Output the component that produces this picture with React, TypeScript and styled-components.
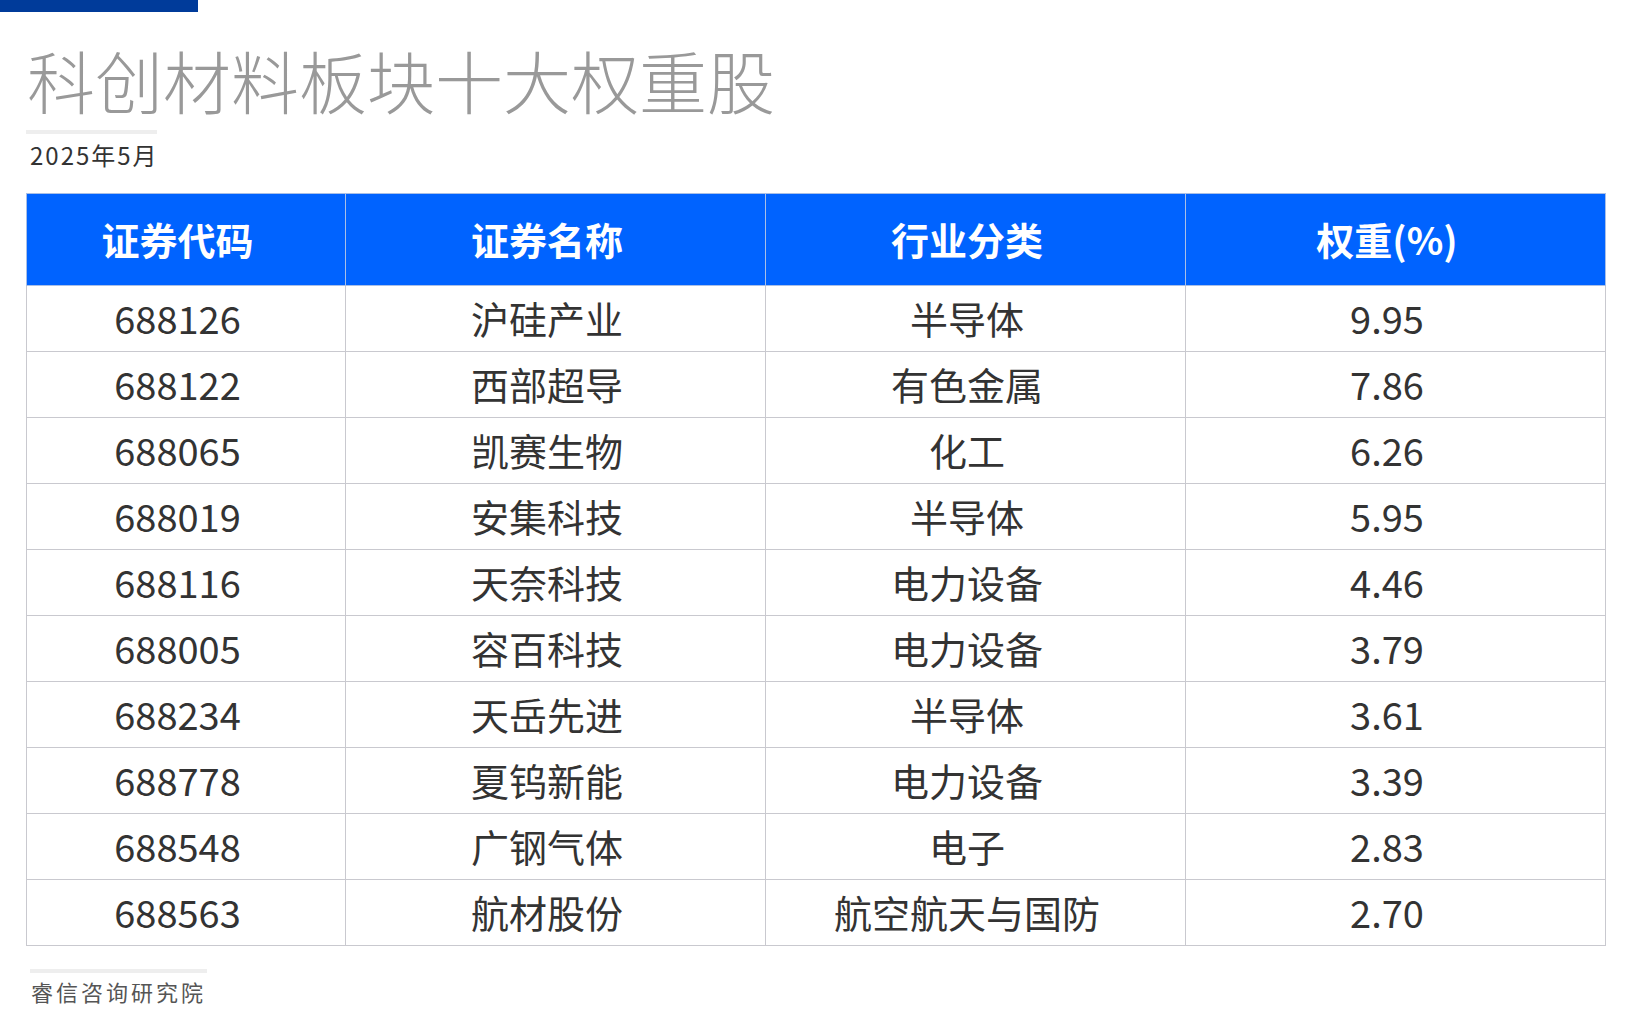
import styled, { createGlobalStyle } from "styled-components"

const GlobalStyle = createGlobalStyle`
    body {
        margin: 0;
        background: #ffffff;
        font-family: "Noto Sans CJK SC", "Noto Sans", sans-serif;
    }
`

const Page = styled.div`
    width: 1631px;
    height: 1014px;
    overflow: hidden;
    background: #ffffff;
`

const TopBar = styled.div`
    width: 198px;
    height: 12px;
    background-color: #003b9a;
`

const Content = styled.div`
    display: flex;
    flex-direction: column;
    padding: 0 26px 0 26px;
`

const Title = styled.h1`
    margin: 34px 0 0 1px;
    font-size: 68px;
    line-height: 68px;
    font-weight: 300;
    color: #999999;
    letter-spacing: 0;
`

const Rule = styled.div<{ width: number }>`
    width: ${props => props.width}px;
    height: 4px;
    background-color: #eeeeee;
`

const TitleRule = styled(Rule)`
    margin-top: 16px;
`

const DateText = styled.p`
    margin: 9px 0 0 4px;
    font-size: 24px;
    line-height: 24px;
    letter-spacing: 2px;
    color: #333333;
`

const Table = styled.table`
    margin-top: 26px;
    width: 1579px;
    border-collapse: collapse;
    table-layout: fixed;
`

const Col = styled.col<{ width: number }>`
    width: ${props => props.width}px;
`

const HeadCell = styled.th`
    box-sizing: border-box;
    height: 92px;
    padding: 0 17px 2px 0;
    background-color: #0063ff;
    border: 1px solid #a9bfe6;
    color: #ffffff;
    font-size: 38px;
    font-weight: 700;
    text-align: center;
`

const Cell = styled.td`
    box-sizing: border-box;
    height: 66px;
    padding: 0 17px 3px 0;
    border: 1px solid #c9c9cf;
    color: #333333;
    font-size: 38px;
    font-weight: 400;
    text-align: center;
`

const FooterRule = styled(Rule)`
    margin: 23px 0 0 4px;
`

const Source = styled.p`
    margin: 6px 0 0 5px;
    font-size: 22px;
    line-height: 24px;
    letter-spacing: 3px;
    color: #555555;
`

type Stock = {
    code: string;
    name: string;
    industry: string;
    weight: string;
}

const stocks: Stock[] = [
    { code: "688126", name: "沪硅产业", industry: "半导体", weight: "9.95" },
    { code: "688122", name: "西部超导", industry: "有色金属", weight: "7.86" },
    { code: "688065", name: "凯赛生物", industry: "化工", weight: "6.26" },
    { code: "688019", name: "安集科技", industry: "半导体", weight: "5.95" },
    { code: "688116", name: "天奈科技", industry: "电力设备", weight: "4.46" },
    { code: "688005", name: "容百科技", industry: "电力设备", weight: "3.79" },
    { code: "688234", name: "天岳先进", industry: "半导体", weight: "3.61" },
    { code: "688778", name: "夏钨新能", industry: "电力设备", weight: "3.39" },
    { code: "688548", name: "广钢气体", industry: "电子", weight: "2.83" },
    { code: "688563", name: "航材股份", industry: "航空航天与国防", weight: "2.70" },
]

const columns = [319, 420, 420, 420]

export default function App() {
    return (
        <Page>
            <GlobalStyle />
            <TopBar />
            <Content>
                <Title>科创材料板块十大权重股</Title>
                <TitleRule width={131} />
                <DateText>2025年5月</DateText>
                <Table>
                    <colgroup>
                        {columns.map((w, i) => <Col key={i} width={w} />)}
                    </colgroup>
                    <thead>
                        <tr>
                            <HeadCell>证券代码</HeadCell>
                            <HeadCell>证券名称</HeadCell>
                            <HeadCell>行业分类</HeadCell>
                            <HeadCell>权重(%)</HeadCell>
                        </tr>
                    </thead>
                    <tbody>
                        {stocks.map(s => (
                            <tr key={s.code}>
                                <Cell>{s.code}</Cell>
                                <Cell>{s.name}</Cell>
                                <Cell>{s.industry}</Cell>
                                <Cell>{s.weight}</Cell>
                            </tr>
                        ))}
                    </tbody>
                </Table>
                <FooterRule width={177} />
                <Source>睿信咨询研究院</Source>
            </Content>
        </Page>
    )
}
